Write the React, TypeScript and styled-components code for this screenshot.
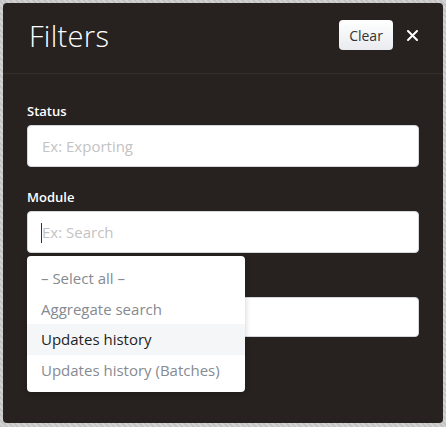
import styled, { createGlobalStyle } from 'styled-components';

const GlobalStyle = createGlobalStyle`
  html, body {
    margin: 0;
    padding: 0;
  }
  body {
    background-color: #c9c9c9;
    background-image: repeating-linear-gradient(
      45deg,
      #c4c4c4 0px,
      #c4c4c4 2px,
      #d3d3d3 2px,
      #d3d3d3 4px
    );
    min-height: 427px;
    font-family: 'Open Sans', 'Noto Sans', sans-serif;
  }
`;

const Panel = styled.div`
  margin: 3px;
  width: 440px;
  height: 420px;
  box-sizing: border-box;
  background: #27221f;
  border-radius: 4px;
  display: flex;
  flex-direction: column;
`;

const Header = styled.div`
  display: flex;
  align-items: center;
  justify-content: space-between;
  height: 70px;
  padding: 0 25px 0 26px;
  border-bottom: 1px solid #342e2a;
`;

const Title = styled.h1`
  margin: 0;
  font-family: 'Open Sans', sans-serif;
  font-weight: 300;
  font-size: 29px;
  letter-spacing: 0.3px;
  color: #ffffff;
  padding-bottom: 6px;
`;

const Actions = styled.div`
  display: flex;
  align-items: center;
  gap: 13px;
  padding-bottom: 6px;
`;

const ClearButton = styled.button`
  width: 54px;
  height: 30px;
  border: none;
  border-radius: 4px;
  background: linear-gradient(#ffffff, #e9ebef);
  color: #333;
  font-family: 'Open Sans', sans-serif;
  font-size: 14px;
  padding: 0;
  cursor: pointer;
`;

const CloseButton = styled.button`
  background: none;
  border: none;
  padding: 0;
  width: 12px;
  height: 12px;
  display: flex;
  align-items: center;
  justify-content: center;
  cursor: pointer;
`;

const Body = styled.div`
  padding: 27px 24px 0 24px;
  display: flex;
  flex-direction: column;
  gap: 20px;
`;

const Field = styled.div`
  position: relative;
  display: flex;
  flex-direction: column;
  gap: 4px;
`;

const Label = styled.label`
  font-family: 'Open Sans', sans-serif;
  font-size: 13px;
  font-weight: 600;
  line-height: 20px;
  height: 20px;
  color: #ffffff;
`;

const Input = styled.input<{ $h?: number }>`
  box-sizing: border-box;
  width: 100%;
  height: ${(p) => p.$h ?? 42}px;
  border: 1px solid #d4d6dc;
  border-radius: 4px;
  background: #fff;
  padding: 0 14px;
  font-family: 'Open Sans', sans-serif;
  font-size: 15px;
  color: #333;
  outline: none;
  &::placeholder {
    color: #c3c3c3;
  }
`;

const Caret = styled.span`
  position: absolute;
  left: 14px;
  bottom: 10px;
  width: 1px;
  height: 20px;
  background: #333;
`;

const Dropdown = styled.ul`
  position: absolute;
  top: calc(100% + 3px);
  left: 0;
  width: 218px;
  margin: 0;
  padding: 7px 0;
  list-style: none;
  background: #fff;
  border-radius: 4px;
  box-shadow: 0 2px 6px rgba(0, 0, 0, 0.2);
  z-index: 2;
`;

const Option = styled.li<{ $active?: boolean }>`
  height: 30.5px;
  display: flex;
  align-items: center;
  padding: 0 14px;
  font-family: 'Open Sans', sans-serif;
  font-size: 15px;
  color: ${(p) => (p.$active ? '#1f1f1f' : '#868a91')};
  background: ${(p) => (p.$active ? '#f5f6f8' : 'transparent')};
  white-space: nowrap;
`;

const options = ['– Select all –', 'Aggregate search', 'Updates history', 'Updates history (Batches)'];

export default function App() {
  return (
    <>
      <GlobalStyle />
      <Panel>
        <Header>
          <Title>Filters</Title>
          <Actions>
            <ClearButton>Clear</ClearButton>
            <CloseButton aria-label='close'>
              <svg width='11' height='11' viewBox='0 0 11 11'>
                <path d='M1 1 L10 10 M10 1 L1 10' stroke='#fff' strokeWidth='2' strokeLinecap='round' />
              </svg>
            </CloseButton>
          </Actions>
        </Header>
        <Body>
          <Field>
            <Label>Status</Label>
            <Input placeholder='Ex: Exporting' />
          </Field>
          <Field>
            <Label>Module</Label>
            <div style={{ position: 'relative' }}>
              <Input placeholder='Ex: Search' />
              <Caret />
              <Dropdown>
                {options.map((o) => (
                  <Option key={o} $active={o === 'Updates history'}>
                    {o}
                  </Option>
                ))}
              </Dropdown>
            </div>
          </Field>
          <Field>
            {/* label of this field sits under the open dropdown */}
            <Label />
            <Input $h={40} />
          </Field>
        </Body>
      </Panel>
    </>
  );
}
